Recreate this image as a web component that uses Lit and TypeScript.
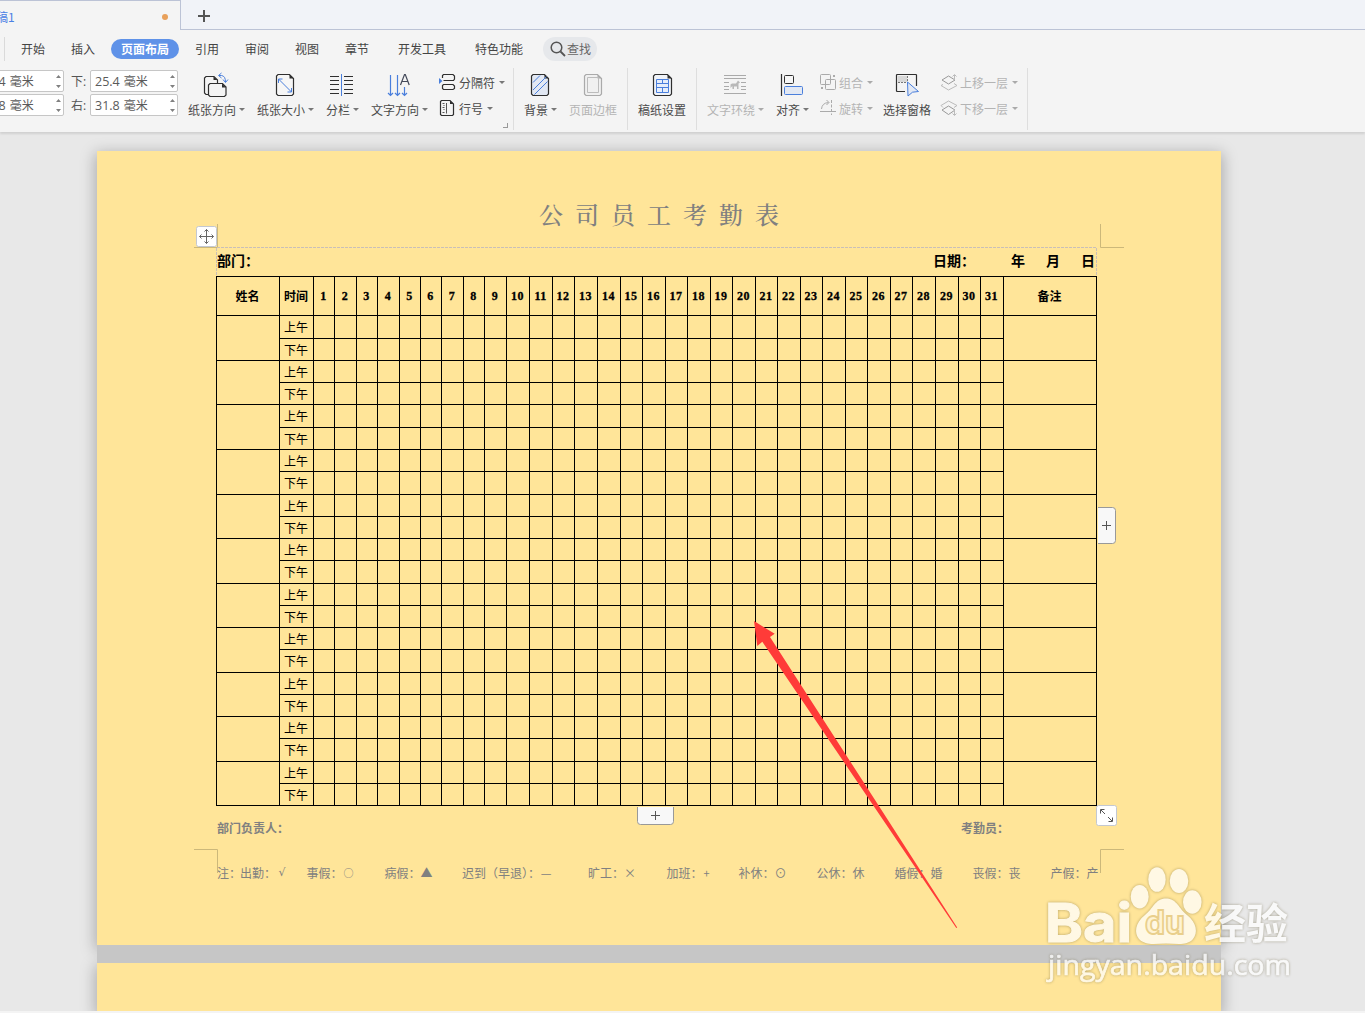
import { LitElement, html, svg, css } from "lit";
import { customElement } from "lit/decorators.js";

const INK = "#2f2f2f";
const BLUE = "#4a7fdc";
const DIM = "#aaaaaa";

type Item = { x: number; w: number; label: string; icon: unknown; caret?: boolean; dim?: boolean };

const doc = (x: number, w: number, fill: string, stroke: string) => svg`
  <path d="M${x + 1.5} 74.5H${x + w - 4}L${x + w} 78.5V94L${x + w - 1.5} 95.5H${x + 1.5}L${x} 94V76Z" fill=${fill} stroke=${stroke} stroke-width="1.2"/>
  <path d="M${x + w - 4} 74.5V78.5H${x + w}Z" fill=${stroke}/>`;

const icons = {
  orient: svg`<path d="M208 94.500H206L204.500 93V78L206 76.500H214L217.500 80V83" fill="none" stroke=${INK} stroke-width="1.200"/>
    <path d="M213.500 76.500V80H217.500Z" fill=${INK}/>
    <path d="M210 83.500H222.500L226 87V95L224.500 96.500H210L208.500 95V85Z" fill="#f4f4f4" stroke=${INK} stroke-width="1.200"/>
    <path d="M222 83.500V87.500H226Z" fill=${INK}/>
    <path d="M219 75.500H221.500Q225.500 76 225.500 82M221.500 73L218.500 75.500L221.500 78M223 79.500L225.500 82.500L228 79.500" fill="none" stroke=${BLUE}/>`,
  size: svg`${doc(276.5, 17, "#f6f6f6", INK)}
    <path d="M278.500 79L291.500 92M278.500 83V79H282.500M291.500 88V92H287.500" fill="none" stroke=${BLUE}/>`,
  columns: svg`<path d="M330 76.500H339M330 80.500H339M330 84.500H339M330 89.500H339M330 93.500H339M344 76.500H353M344 80.500H353M344 84.500H353M344 89.500H353M344 93.500H353" stroke=${INK} stroke-width="1.200"/>
    <path d="M341.500 74V96" stroke=${BLUE}/>`,
  textdir: svg`<path d="M390.500 75V95M397.500 75V95M404.500 87V95M388 93L390.500 95.500L393 93M395 93L397.500 95.500L400 93M402 93L404.500 95.500L407 93" fill="none" stroke=${BLUE} stroke-width="1.200"/>
    <path d="M400.500 85L404.500 74.500H405.300L409.200 85M402 81.500H407.800" fill="none" stroke="#444a5a" stroke-width="1.200"/>`,
  breaks: svg`<path d="M442.500 78V75.500L443.500 74.500H453L454.500 76V79L453.500 80.500H443.500M442.500 88.500V85.500L443.500 84.500H453L454.500 86V88.500L453 89.500H443.500Z" fill="none" stroke=${INK} stroke-width="1.200"/>
    <path d="M439 78V84L442.500 81Z" fill=${BLUE}/>`,
  lines: svg`<path d="M440.500 101.500L441.500 100.500H450L453.500 104V114.500L452.500 115.500H441.500L440.500 114.500Z" fill="none" stroke=${INK} stroke-width="1.200"/>
    <path d="M450 100.500V104H453.500Z" fill=${INK}/>
    <path d="M446.500 103V113.500M442.500 103.500H444.500M443.500 105.500H444.500M442.500 107.500H444.500M443.500 109.500H444.500M442.500 112.500H444.500" stroke="#555"/>`,
  background: svg`${doc(531.5, 17, "#e2e8f3", INK)}
    <path d="M533 82.500L540 75.500M533 90L546.500 76.500M534.500 94.500L547.500 81.500" stroke=${BLUE}/>`,
  border: svg`${doc(584.5, 17, "#f0f0f0", DIM)}<path d="M587.500 77.500H598.500V92.500H587.500Z" fill="none" stroke="#bcbcbc"/>`,
  manuscript: svg`${doc(653.5, 18, "#f0f3f8", INK)}
    <path d="M656.500 79.500H668.500V92.500H656.500ZM656.500 83.500H668.500M656.500 87.500H668.500M662.500 79.500V83.500M662.500 87.500V92.500" fill="#e6eefb" stroke=${BLUE}/>`,
  wrap: svg`<path d="M724 75.500H746M724 78.500H746M724 82.500H729M741 82.500H746M724 86.500H729M741 86.500H746M724 89.500H729M741 89.500H746M724 93.500H746" stroke=${DIM}/>
    <path d="M730.500 84.500L732 83.500H736L738 80.500L740 82.500L738.500 83.500V89H737V86.500H734V89H732.500L732.300 86L730.500 88Z" fill="#b9b9b9"/>`,
  align: svg`<path d="M781.500 74V96" stroke=${INK} stroke-width="1.200"/>
    <rect x="784.500" y="75.500" width="9" height="8" rx="1" fill="#f6f6f6" stroke=${INK}/>
    <rect x="784.500" y="86.500" width="18" height="8" rx="1" fill="#e2e8f3" stroke=${BLUE}/>`,
  group: svg`<rect x="820.500" y="74.500" width="10" height="10" rx="1" fill="none" stroke=${DIM}/>
    <rect x="825.500" y="79.500" width="10" height="10" rx="1" fill="none" stroke=${DIM}/>
    <path d="M833 75H835V77H833ZM821 87H823V89H821Z" fill=${DIM}/>`,
  rotate: svg`<path d="M820 111.500H836M821.500 109Q822 103 828.500 102.500M826.500 100L829 102.500L826.500 105" fill="none" stroke=${DIM}/>
    <path d="M831.500 100V115" stroke=${DIM} stroke-dasharray="3 1.500"/>`,
  pane: svg`<path d="M898 76H907V82H898Z" fill="#d8d8d8"/>
    <path d="M905 91.500H897L896.500 91V75L897 74.500H916L916.500 75V86" fill="none" stroke=${INK} stroke-width="1.200"/>
    <path d="M898 82.500H907M907.500 76V82" stroke="#777" stroke-dasharray="2 1"/>
    <path d="M907.500 82L918.500 91.500L912.500 92.200L908 96Z" fill="#e2e8f3" stroke=${BLUE}/>`,
  up: svg`<path d="M942 80L948.500 76L955 80L948.500 84Z" fill="none" stroke="#999"/>
    <path d="M943 84.500L941 85.500L948.500 90L957 85.500L954 83.500" fill="none" stroke="#bbb"/>
    <path d="M954.500 80V75M952.500 76.500L954.500 74.500L956.500 76.500" fill="none" stroke="#bbb"/>`,
  down: svg`<path d="M943 107.500L941 105.500L948.500 101L957 105.500L954 107.500" fill="none" stroke="#bbb"/>
    <path d="M942 110L948.500 106L955 110L948.500 114.500Z" fill="none" stroke="#999"/>
    <path d="M954.500 109.500V115M952.500 113.500L954.500 115.500L956.500 113.500" fill="none" stroke="#bbb"/>`,
};

const COLS = [63, 34, 21, 22, 21, 22, 21, 21, 22, 21, 22, 23, 23, 22, 23, 23, 22, 23, 22, 23, 22, 23, 22, 23, 22, 23, 22, 23, 22, 23, 23, 22, 23, 93];
const ROWS = [39, 23, 22, 22, 22, 23, 22, 22, 23, 22, 22, 22, 23, 22, 22, 22, 23, 22, 22, 22, 23, 22, 22];
const DAYS = Array.from({ length: 31 }, (_, i) => i + 1);
const PEOPLE = Array.from({ length: 11 }, (_, i) => i);
const NOTES: [number, string, string, string?][] = [
  [23, "注：", ""], [66.5, "出勤：", "√", "tick"], [78, "事假：", "○", "ring"], [77.5, "病假：", "▲"],
  [126, "迟到（早退）：", "—"], [78.5, "旷工：", "×"], [72, "加班：", "+", "plus"], [78, "补休：", "⊙"],
  [78, "公休：", "休"], [78, "婚假：", "婚"], [78, "丧假：", "丧"], [60, "产假：", "产"],
];

@customElement("attendance-sheet")
class AttendanceSheet extends LitElement {
  static styles = css`
    :host { display: block; }
    .grid {
      display: grid; box-sizing: border-box; width: 881px; height: 530px;
      border-left: 1px solid #000; border-top: 1px solid #000;
      font: 12px/1 "Noto Sans CJK SC", sans-serif; color: #000;
    }
    .cell {
      border-right: 1px solid #000; border-bottom: 1px solid #000;
      display: flex; align-items: center; justify-content: center; min-width: 0; white-space: nowrap;
      padding-right: 1px;
    }
    .head { font-weight: 700; }
    .day { font: 700 12px/1 "Liberation Serif", serif; -webkit-text-stroke: 0.3px #000; padding-right: 1px; letter-spacing: 0.4px; }
    .tall { grid-row: span 2; }
  `;
  render() {
    const tracks = `grid-template-columns:${COLS.map((c) => c + "px").join(" ")};grid-template-rows:${ROWS.map((r) => r + "px").join(" ")}`;
    return html`<div class="grid" style=${tracks}>
      <div class="cell head">姓名</div>
      <div class="cell head">时间</div>
      ${DAYS.map((d) => html`<div class="cell day">${d}</div>`)}
      <div class="cell head">备注</div>
      ${PEOPLE.map(() => html`
        <div class="cell tall"></div>
        <div class="cell">上午</div>
        ${DAYS.map(() => html`<div class="cell"></div>`)}
        <div class="cell tall"></div>
        <div class="cell">下午</div>
        ${DAYS.map(() => html`<div class="cell"></div>`)}
      `)}
    </div>`;
  }
}

@customElement("app-root")
class AppRoot extends LitElement {
  static styles = css`
    :host {
      display: block; position: relative; width: 1365px; height: 1013px; overflow: hidden;
      background: #e8e8e8; color: #444;
      font: 12px/16px "Open Sans", "Noto Sans CJK SC", sans-serif;
    }
    svg { display: block; overflow: visible; flex: none; }
    .tabs { display: flex; height: 30px; background: #f1f3f8; }
    .file {
      box-sizing: border-box; width: 181px; border-top: 1px solid #bcc3d6; border-right: 1px solid #bcc3d6;
      background: #f4f4f4; display: flex; align-items: center; justify-content: space-between;
      padding: 0 12px 0 0; color: #4a80e4; font-family: "Noto Sans CJK SC", sans-serif; line-height: 20px;
    }
    .name { margin-left: -4px; margin-top: 2px; }
    .dot { width: 6px; height: 6px; border-radius: 50%; background: #e8a05a; margin-top: 3px; }
    .rest { box-sizing: border-box; flex: 1; border-bottom: 1px solid #bcc3d6; padding: 10px 0 0 17px; }
    .menu { display: flex; align-items: center; height: 38px; background: #f4f4f4; white-space: nowrap; font-family: "Noto Sans CJK SC", sans-serif; }
    .bar { width: 1px; height: 24px; background: #dadada; margin-left: 4px; }
    .m { width: 24px; margin-left: 26px; }
    .m.first { margin-left: 16px; }
    .m.after { margin-left: 16px; }
    .m.four { width: 48px; margin-left: 29px; }
    .pill { box-sizing: border-box; width: 68px; height: 20px; border-radius: 10px; background: #5f92e8; color: #fff; font-weight: 700; line-height: 19px; text-align: center; margin-left: 16px; }
    .find { box-sizing: border-box; width: 54px; height: 24px; border-radius: 12px; background: #e6e8eb; margin-left: 20px; display: flex; align-items: center; padding-left: 7px; gap: 1px; color: #666; }
    .ribbon { box-sizing: border-box; display: flex; height: 64px; background: #f4f4f4; box-shadow: 0 2px 2px rgba(0, 0, 0, 0.1); position: relative; white-space: nowrap; }
    .margins { display: flex; flex-direction: column; gap: 2px; padding-top: 2px; margin-left: -24px; width: 202px; flex: none; }
    .line { display: flex; align-items: center; height: 22px; }
    .tag { width: 26px; box-sizing: border-box; padding: 1px 0 0 7px; color: #555; }
    .spin {
      box-sizing: border-box; width: 88px; height: 22px; border: 1px solid #c6c6c6; border-radius: 2px; background: #fff;
      display: flex; align-items: center; justify-content: space-between; padding: 0 2px 0 4px; color: #5a5a5a;
    }
    .value { padding-top: 2px; }
    .num { font-size: 12.5px; }
    .unit { font-size: 12px; margin-left: 4px; }
    .item { flex: none; padding-top: 4px; color: #4a4a4a; }
    .caption { display: flex; align-items: center; gap: 3px; height: 16px; margin-top: 1.5px; font-family: "Noto Sans CJK SC", sans-serif; }
    .caption.side { margin: 1px 0 0; gap: 4px; }
    .caret { width: 0; border: 3px solid transparent; border-top: 3px solid #777; border-bottom: 0; margin-top: -1px; }
    .item.dim, .stack.dim { color: #b4b4b4; }
    .dim .caret { border-top-color: #aaa; }
    .stack { flex: none; display: flex; flex-direction: column; gap: 10px; padding-top: 6px; color: #4a4a4a; }
    .mini { display: flex; align-items: center; gap: 3px; height: 16px; }
    .rule { flex: none; width: 1px; height: 62px; background: #dedede; }
    .launch { flex: none; width: 4px; height: 4px; border: 1px solid #999; border-left: 0; border-top: 0; margin: 55px 0 0 -1px; }
    .desk { padding: 19px 0 0 97px; display: flex; flex-direction: column; gap: 18px; }
    .page { box-sizing: border-box; position: relative; width: 1124px; height: 794px; background: #ffe599; box-shadow: 0 4px 14px 2px rgba(0, 0, 0, 0.26); font-family: "Noto Sans CJK SC", sans-serif; }
    .page.next { height: 48px; }
    .page.next::before { content: ""; position: absolute; inset: -18px 0 auto; height: 18px; background: #c6c6c6; }
    .sheet { display: flex; flex-direction: column; padding: 0 0 0 119px; width: 881px; white-space: nowrap; }
    .title { margin: 48px 0 0 323px; height: 30px; font: 500 24px/30px "Noto Serif CJK SC", "Noto Sans CJK SC", serif; letter-spacing: 12px; color: #808080; }
    .meta { display: flex; height: 28px; margin: 17px 0 2px; align-items: center; font-size: 14px; font-weight: 700; color: #000; padding-left: 1px; }
    .date { margin-left: 674px; width: 78px; }
    .ymd { width: 35px; }
    .signs { display: flex; height: 20px; margin-top: 12px; align-items: center; font-weight: 700; color: #808080; padding-left: 1px; }
    .second { margin-left: 672px; }
    .notes { display: flex; height: 20px; margin-top: 25px; align-items: center; color: #808080; padding-left: 1px; }
    .note { flex: none; display: flex; }
    .sym { display: block; width: 12px; text-align: center; }
    .tick { font-family: "DejaVu Sans", sans-serif; font-size: 11px; }
    .ring { font-size: 10px; }
    .plus { font-size: 11px; width: 8px; }
    .over { position: absolute; left: 0; top: 0; pointer-events: none; }
    .foot { position: absolute; left: 0; right: 0; bottom: 0; height: 2px; background: #f4f4f4; }
  `;

  caret(on?: boolean) {
    return on ? html`<i class="caret"></i>` : "";
  }

  /* Large ribbon button; gap is the space left of it, x its left edge in icon units. */
  big(gap: number, it: Item) {
    return html`<div class="item ${it.dim ? "dim" : ""}" style="margin-left:${gap}px;width:${it.w}px">
      <svg width=${it.w} height="28" viewBox="${it.x} 72 ${it.w} 28">${it.icon}</svg>
      <div class="caption">${it.label}${this.caret(it.caret)}</div>
    </div>`;
  }

  mini(x: number, y: number, icon: unknown, label: string) {
    return html`<div class="mini"><svg width="16" height="16" viewBox="${x} ${y} 16 16">${icon}</svg>
      <div class="caption side">${label}<i class="caret"></i></div></div>`;
  }

  spin(n: string) {
    return html`<div class="spin"><span class="value"><span class="num">${n}</span><span class="unit">毫米</span></span>
      <svg width="5" height="14" viewBox="0 0 5 14"><path d="M0 4L2.500 1L5 4ZM0 11L2.500 14L5 11Z" fill="#808080"/></svg></div>`;
  }

  render() {
    return html`
      <div class="tabs">
        <div class="file"><span class="name">稿1</span><i class="dot"></i></div>
        <div class="rest"><svg width="12" height="12"><path d="M6 0V12M0 6H12" stroke="#555" stroke-width="2"/></svg></div>
      </div>
      <div class="menu">
        <i class="bar"></i>
        <span class="m first">开始</span><span class="m">插入</span><span class="pill">页面布局</span>
        <span class="m after">引用</span><span class="m">审阅</span><span class="m">视图</span><span class="m">章节</span>
        <span class="m four">开发工具</span><span class="m four">特色功能</span>
        <span class="find"><svg width="16" height="16"><circle cx="6.500" cy="6.500" r="5.300" fill="none" stroke="#555" stroke-width="1.500"/><path d="M10.500 10.500L15 15" stroke="#555" stroke-width="1.800"/></svg>查找</span>
      </div>
      <div class="ribbon">
        <div class="margins">
          <div class="line">${this.spin("25.4")}<span class="tag">下:</span>${this.spin("25.4")}</div>
          <div class="line">${this.spin("31.8")}<span class="tag">右:</span>${this.spin("31.8")}</div>
        </div>
        ${this.big(10, { x: 188, w: 56, label: "纸张方向", icon: icons.orient, caret: true })}
        ${this.big(13, { x: 257, w: 56, label: "纸张大小", icon: icons.size, caret: true })}
        ${this.big(13, { x: 326, w: 32, label: "分栏", icon: icons.columns, caret: true })}
        ${this.big(13, { x: 371, w: 56, label: "文字方向", icon: icons.textdir, caret: true })}
        <div class="stack" style="margin-left:13px;width:64px">
          ${this.mini(440, 74, icons.breaks, "分隔符")}
          ${this.mini(440, 100, icons.lines, "行号")}
        </div>
        <i class="launch"></i><i class="rule" style="margin-left:5px"></i>
        ${this.big(10, { x: 524, w: 32, label: "背景", icon: icons.background, caret: true })}
        ${this.big(13, { x: 569, w: 48, label: "页面边框", icon: icons.border, dim: true })}
        <i class="rule" style="margin-left:10px"></i>
        ${this.big(10, { x: 638, w: 48, label: "稿纸设置", icon: icons.manuscript })}
        <i class="rule" style="margin-left:10px"></i>
        ${this.big(10, { x: 707, w: 56, label: "文字环绕", icon: icons.wrap, caret: true, dim: true })}
        ${this.big(13, { x: 776, w: 32, label: "对齐", icon: icons.align, caret: true })}
        <div class="stack dim" style="margin-left:12px;width:53px">
          ${this.mini(820, 74, icons.group, "组合")}
          ${this.mini(820, 100, icons.rotate, "旋转")}
        </div>
        ${this.big(10, { x: 883, w: 48, label: "选择窗格", icon: icons.pane })}
        <div class="stack dim" style="margin-left:10px;width:77px">
          ${this.mini(941, 74, icons.up, "上移一层")}
          ${this.mini(941, 100, icons.down, "下移一层")}
        </div>
        <i class="rule" style="margin-left:9px"></i>
      </div>
      <div class="desk">
        <div class="page">
          <div class="sheet">
            <div class="title">公司员工考勤表</div>
            <div class="meta"><span>部门：</span><span class="date">日期：</span><span class="ymd">年</span><span class="ymd">月</span><span>日</span></div>
            <attendance-sheet></attendance-sheet>
            <div class="signs"><span>部门负责人：</span><span class="second">考勤员：</span></div>
            <div class="notes">${NOTES.map(([w, t, s, c]) => html`<span class="note" style="width:${w}px">${t}<span class="sym ${c ?? ""}">${s}</span></span>`)}</div>
          </div>
        </div>
        <div class="page next"></div>
      </div>
      <svg class="over" width="1365" height="1013" viewBox="0 0 1365 1013">
        <path d="M217.500 224V247.500H194M1100.500 224V247.500H1124M217.500 873V849.500H194M1100.500 873V849.500H1124" fill="none" stroke="#ccb87a"/>
        <path d="M217 247.500H1096.500V276M216.500 248V276" fill="none" stroke="#c9bfb8" stroke-dasharray="3 1"/>
        <rect x="196.500" y="226.500" width="20" height="20" rx="2" fill="#fff" stroke="#c3c8d2"/>
        <path d="M206.500 229.500V243.500M199.500 236.500H213.500M204.500 231.500L206.500 229.500L208.500 231.500M204.500 241.500L206.500 243.500L208.500 241.500M201.500 234.500L199.500 236.500L201.500 238.500M211.500 234.500L213.500 236.500L211.500 238.500" fill="none" stroke="#666"/>
        <path d="M1098 507.500H1112.500Q1115.500 507.500 1115.500 510.500V540.500Q1115.500 543.500 1112.500 543.500H1098" fill="#f8f8f8" stroke="#999"/>
        <path d="M1106.500 521V530M1102 525.500H1111" stroke="#555"/>
        <path d="M637.500 807V821.500Q637.500 824.500 640.500 824.500H670.500Q673.500 824.500 673.500 821.500V807" fill="#f8f8f8" stroke="#999"/>
        <path d="M655.500 811V820M651 815.500H660" stroke="#555"/>
        <rect x="1096.500" y="805.500" width="20" height="20" rx="2" fill="#fff" stroke="#c3c8d2"/>
        <path d="M1100.500 813.500V809.500H1104.500M1101 810L1105 814M1108 817L1112 821M1112.500 817.500V821.500H1108.500" fill="none" stroke="#555"/>
        <path d="M754 621L774.700 633.700L770 637L957.200 927.500L956.300 928L762.300 641.700L757.300 646Z" fill="#ff3b38"/>
        <g style="filter:drop-shadow(0 0 1.500px rgba(90,80,40,.6))" opacity="0.74" fill="#fff" font-family="Open Sans, Noto Sans CJK SC, sans-serif">
          <text x="1045" y="942" font-size="54" font-weight="700" stroke="#fff" textLength="87" lengthAdjust="spacingAndGlyphs" font-family="Inter, sans-serif">Bai</text>
          <ellipse cx="1139.700" cy="896.700" rx="9" ry="11.800"/>
          <ellipse cx="1157" cy="879.500" rx="8.700" ry="12.300"/>
          <ellipse cx="1179" cy="881" rx="9.300" ry="12"/>
          <ellipse cx="1192.300" cy="902" rx="9.300" ry="11.800"/>
          <path d="M1166 898.500C1177 898.500 1179 909 1187 915C1197 923 1198 933 1193 939C1187 946 1177 943.500 1166 943.500C1155 943.500 1146 946 1139 939C1134 933 1135 923 1145 915C1153 909 1155 898.500 1166 898.500Z"/>
          <text x="1204" y="939" font-size="42" font-weight="700" textLength="84" lengthAdjust="spacingAndGlyphs" font-family="Noto Sans CJK SC, sans-serif">经验</text>
          <text x="1048" y="975" font-size="27" stroke="#fff" stroke-width="0.700" textLength="243" lengthAdjust="spacingAndGlyphs">jingyan.baidu.com</text>
        </g>
        <text x="1145" y="934" font-size="33" font-weight="700" textLength="40" lengthAdjust="spacingAndGlyphs" font-family="Inter, sans-serif" fill="#fff3d2" stroke="#e9cf8c" stroke-width="1.800">du</text>
      </svg>
      <i class="foot"></i>
    `;
  }
}
